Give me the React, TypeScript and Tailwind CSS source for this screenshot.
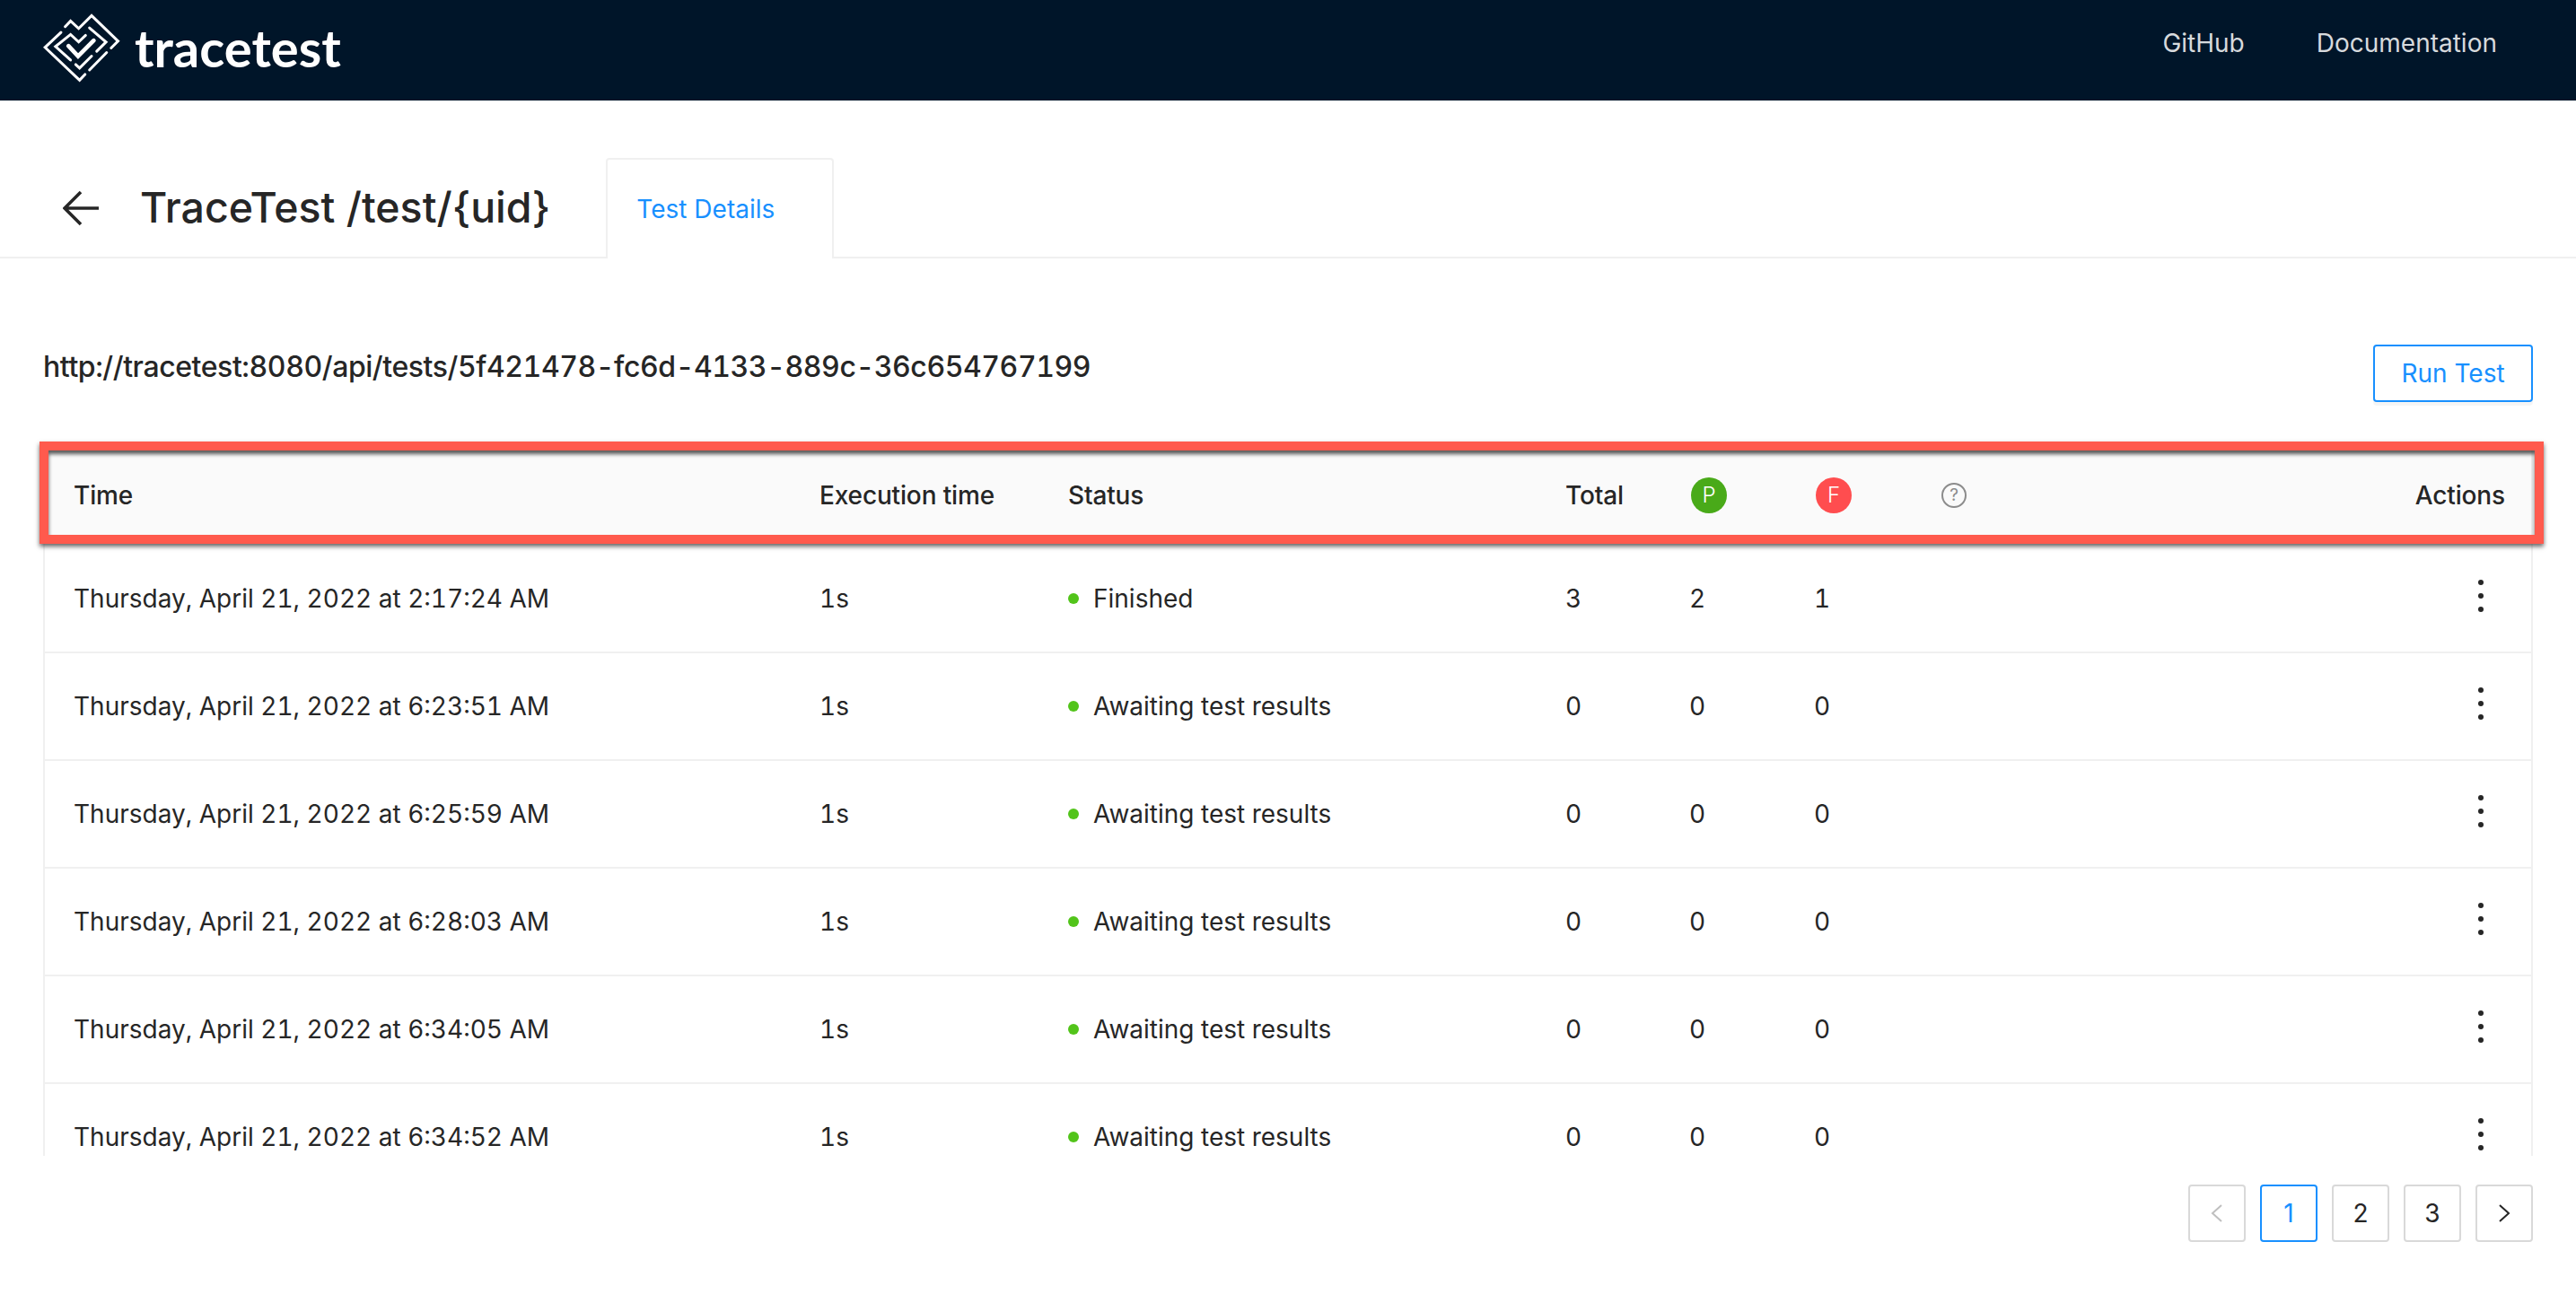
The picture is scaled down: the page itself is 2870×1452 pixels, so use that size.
const ROWS = [
  { time: "Thursday, April 21, 2022 at 2:17:24 AM", status: "Finished", total: 3, passed: 2, failed: 1 },
  { time: "Thursday, April 21, 2022 at 6:23:51 AM", status: "Awaiting test results", total: 0, passed: 0, failed: 0 },
  { time: "Thursday, April 21, 2022 at 6:25:59 AM", status: "Awaiting test results", total: 0, passed: 0, failed: 0 },
  { time: "Thursday, April 21, 2022 at 6:28:03 AM", status: "Awaiting test results", total: 0, passed: 0, failed: 0 },
  { time: "Thursday, April 21, 2022 at 6:34:05 AM", status: "Awaiting test results", total: 0, passed: 0, failed: 0 },
  { time: "Thursday, April 21, 2022 at 6:34:52 AM", status: "Awaiting test results", total: 0, passed: 0, failed: 0 },
];

const COLUMNS = "grid grid-cols-[831px_277px_554px_140px_139px_140px_140px_1fr] items-center";

function Logo() {
  return (
    <svg width="86" height="77" viewBox="144 40 256 230" fill="none" stroke="#fff" strokeWidth="9" strokeLinecap="round" strokeLinejoin="miter">
      <path d="M203 103 150 153 265 262 283 243" />
      <path d="M217 84 235 65 262 90 305 47 393 132 370 155" />
      <path d="M298 88 353 135 322 166" />
      <path d="M285 113 262 135 235 110 185 150 235 195" />
      <path d="M228 148 260 182 312 130" strokeWidth="14" />
      <path d="M355 170 298 228" />
      <path d="M305 182 265 222 252 210" />
    </svg>
  );
}

function Pager({ children, active, disabled }: { children: React.ReactNode; active?: boolean; disabled?: boolean }) {
  return (
    <button
      type="button"
      className={
        active
          ? "flex h-[64px] w-[64px] items-center justify-center rounded-[4px] border-2 border-[#1890ff] bg-white text-[28px] text-[#1890ff]"
          : disabled
            ? "flex h-[64px] w-[64px] items-center justify-center rounded-[4px] border-2 border-[#d9d9d9] bg-white text-[#bfbfbf]"
            : "flex h-[64px] w-[64px] items-center justify-center rounded-[4px] border-2 border-[#d9d9d9] bg-white text-[28px] text-[#262626]"
      }
    >
      {children}
    </button>
  );
}

function Chevron({ d }: { d: string }) {
  return (
    <svg width="16" height="22" viewBox="0 0 16 22" fill="none" stroke="currentColor" strokeWidth="2">
      <path d={d} />
    </svg>
  );
}

export default function App() {
  return (
    <div className="h-[1452px] w-[2870px] overflow-hidden bg-white font-['Inter',sans-serif] text-[#262626]">
      {/* Nav */}
      <header className="flex h-[112px] items-center justify-between bg-[#001529] pl-[48px] pr-[88px]">
        <div className="flex items-center gap-[16px] pb-[6px]">
          <Logo />
          <span className="font-['Lato',sans-serif] text-[58px] font-bold leading-none text-white">tracetest</span>
        </div>
        <nav className="flex items-center gap-[80px] pb-[16px] text-[28px] text-[#ffffffd9]">
          <a href="#github">GitHub</a>
          <a href="#docs">Documentation</a>
        </nav>
      </header>

      {/* Title + tabs */}
      <div className="mt-[64px] flex h-[112px] items-end border-b-2 border-[#f0f0f0] pl-[70px]">
        <div className="flex h-full items-center gap-[46px]">
          <svg className="mt-[2px]" width="40" height="40" viewBox="0 0 40 40" fill="none" stroke="#262626" strokeWidth="3.6">
            <path d="M40 20H3M20 2 2 20l18 18" />
          </svg>
          <h1 className="text-[46.5px] font-medium leading-none">TraceTest /test/{"{uid}"}</h1>
        </div>
        <div className="relative top-[2px] ml-[62px] flex h-[112px] w-[254px] items-center rounded-t-[4px] border-2 border-b-0 border-[#f0f0f0] bg-white pl-[32px] text-[28px] text-[#1890ff]">
          Test Details
        </div>
      </div>

      <main className="px-[48px]">
        {/* Url + action */}
        <div className="flex items-start justify-between pt-[96px]">
          <div className="text-[32px] font-medium tabular-nums leading-[50px] tracking-[-0.43px]">http://tracetest:8080/api/tests/5f421478-fc6d-4133-889c-36c654767199</div>
          <button type="button" className="h-[64px] w-[178px] rounded-[4px] border-2 border-[#1890ff] bg-white text-[28px] text-[#1890ff] shadow-[0_4px_0_rgba(0,0,0,0.04)]">
            Run Test
          </button>
        </div>

        {/* Table */}
        <div className="relative mt-[44px]">
          <div className="h-[796px] overflow-hidden border-x-2 border-[#f0f0f0]">
            <div className={`${COLUMNS} h-[116px] bg-[#fafafa] pt-[4px] text-[28px] font-medium tracking-[-0.15px]`}>
              <div className="pl-[32px]">Time</div>
              <div className="pl-[32px]">Execution time</div>
              <div className="pl-[32px]">Status</div>
              <div className="pl-[32px]">Total</div>
              <div className="pl-[32px]">
                <span className="flex h-[40px] w-[40px] items-center justify-center rounded-full bg-[#49aa19] text-[24px] font-light text-white">P</span>
              </div>
              <div className="pl-[32px]">
                <span className="flex h-[40px] w-[40px] items-center justify-center rounded-full bg-[#ff4d4f] text-[24px] font-light text-white">F</span>
              </div>
              <div className="pl-[32px]">
                <span className="flex h-[28px] w-[28px] items-center justify-center rounded-full border-2 border-[#8c8c8c] text-[19px] font-normal text-[#8c8c8c]">?</span>
              </div>
              <div className="pr-[29px] text-right">Actions</div>
            </div>
            {ROWS.map((row) => (
              <div key={row.time} className={`${COLUMNS} h-[120px] border-b-2 border-[#f0f0f0] text-[28px] tabular-nums`}>
                <div className="pl-[32px]">{row.time}</div>
                <div className="pl-[32px]">1s</div>
                <div className="flex items-center pl-[32px]">
                  <span className="mr-[16px] h-[12px] w-[12px] rounded-full bg-[#52c41a]" />
                  {row.status}
                </div>
                <div className="pl-[32px]">{row.total}</div>
                <div className="pl-[30px]">{row.passed}</div>
                <div className="pl-[30px]">{row.failed}</div>
                <div />
                <div className="mb-[6px] flex flex-col items-end gap-[9px] pr-[53px]">
                  <span className="h-[6px] w-[6px] rounded-full bg-[#262626]" />
                  <span className="h-[6px] w-[6px] rounded-full bg-[#262626]" />
                  <span className="h-[6px] w-[6px] rounded-full bg-[#262626]" />
                </div>
              </div>
            ))}
          </div>
          {/* Red annotation box */}
          <div className="pointer-events-none absolute left-[-4px] right-[-12px] top-0 h-[114px] border-[10px] border-[#ff5a4d] shadow-[0_3px_5px_rgba(0,0,0,0.6),inset_0_4px_4px_rgba(0,0,0,0.65)]" />
        </div>

        {/* Pagination */}
        <div className="mt-[32px] flex justify-end gap-[16px]">
          <Pager disabled>
            <Chevron d="M13 2 3 11l10 9" />
          </Pager>
          <Pager active>1</Pager>
          <Pager>2</Pager>
          <Pager>3</Pager>
          <Pager>
            <Chevron d="M3 2l10 9-10 9" />
          </Pager>
        </div>
      </main>
    </div>
  );
}
